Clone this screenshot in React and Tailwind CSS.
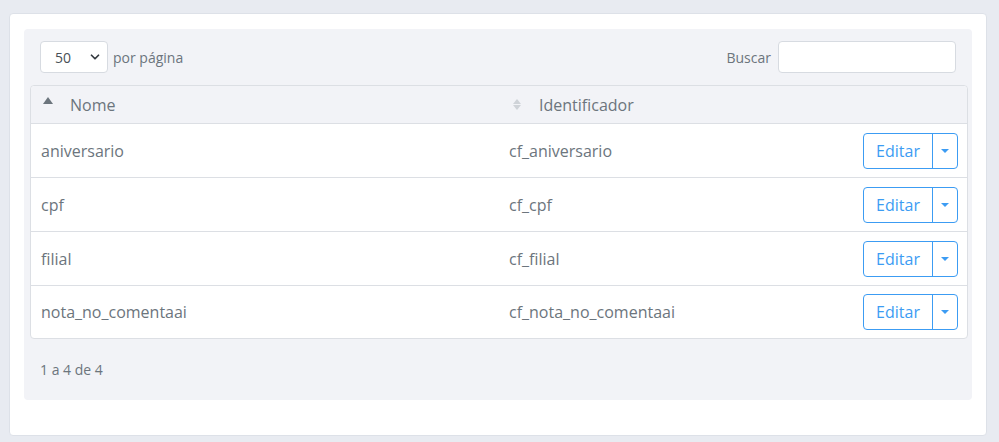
import { ChevronDown } from 'lucide-react';

const rows = [
  { nome: 'aniversario', id: 'cf_aniversario' },
  { nome: 'cpf', id: 'cf_cpf' },
  { nome: 'filial', id: 'cf_filial' },
  { nome: 'nota_no_comentaai', id: 'cf_nota_no_comentaai' },
];

function EditButton() {
  return (
    <div className="flex h-9 rounded border border-[#3c9cf3] text-[#3c9cf3]">
      <button className="w-[69px] border-r border-[#3c9cf3] text-[16px]">Editar</button>
      <button className="flex w-6 items-center justify-center">
        <span className="h-0 w-0 border-x-[4px] border-t-[4px] border-x-transparent border-t-[#3c9cf3]" />
      </button>
    </div>
  );
}

export default function App() {
  return (
    <div
      className="min-h-[442px] bg-[#e8ebf1] px-[9px] pt-[13px] text-[#6c757d]"
      style={{ fontFamily: '"Open Sans", sans-serif' }}
    >
      <div className="h-[423px] w-[978px] rounded border border-[#dde1e8] bg-white px-[14px] pt-[15px]">
        <div className="w-[948px] rounded bg-[#f2f3f7] pl-[6px] pr-[4px] pt-[12px] pb-[20px]">
          {/* top controls */}
          <div className="flex items-center justify-between pl-[10px] pr-[12px]">
            <div className="flex items-center gap-[5px]">
              <div className="flex h-8 w-[68px] items-center justify-between rounded border border-[#d7dbe1] bg-white pl-[14px] pr-[5px] text-[14px] text-[#495057]">
                <span>50</span>
                <ChevronDown size={14} strokeWidth={3} className="text-[#343a40]" />
              </div>
              <span className="text-[14px]">por página</span>
            </div>
            <div className="flex items-center gap-[7px]">
              <span className="text-[14px]">Buscar</span>
              <input className="h-8 w-[178px] rounded border border-[#d7dbe1] bg-white" />
            </div>
          </div>

          {/* table */}
          <div className="mt-3 rounded border border-[#dcdfe4] bg-white">
            <div className="flex h-[37px] items-center rounded-t bg-[#f2f3f7] text-[16px]">
              <div className="flex w-[478px] items-center pl-[12px]">
                <span className="h-0 w-0 border-x-[5px] border-b-[7px] border-x-transparent border-b-[#6c757d] -mt-2" />
                <span className="ml-[17px]">Nome</span>
              </div>
              <div className="flex items-center pl-[4px]">
                <span className="flex flex-col gap-[1px]">
                  <span className="h-0 w-0 border-x-[4px] border-b-[5px] border-x-transparent border-b-[#cfd3d8]" />
                  <span className="h-0 w-0 border-x-[4px] border-t-[5px] border-x-transparent border-t-[#cfd3d8]" />
                </span>
                <span className="ml-[18px]">Identificador</span>
              </div>
            </div>
            {rows.map((r) => (
              <div
                key={r.nome}
                className="flex h-[54px] items-center border-t border-[#dcdfe4] text-[16px] last:h-[53px]"
              >
                <div className="w-[478px] pl-[10px]">{r.nome}</div>
                <div className="flex-1">{r.id}</div>
                <div className="pr-[9px]">
                  <EditButton />
                </div>
              </div>
            ))}
          </div>

          <div className="mt-5 pl-[10px] text-[14px]">1 a 4 de 4</div>
        </div>
      </div>
    </div>
  );
}
